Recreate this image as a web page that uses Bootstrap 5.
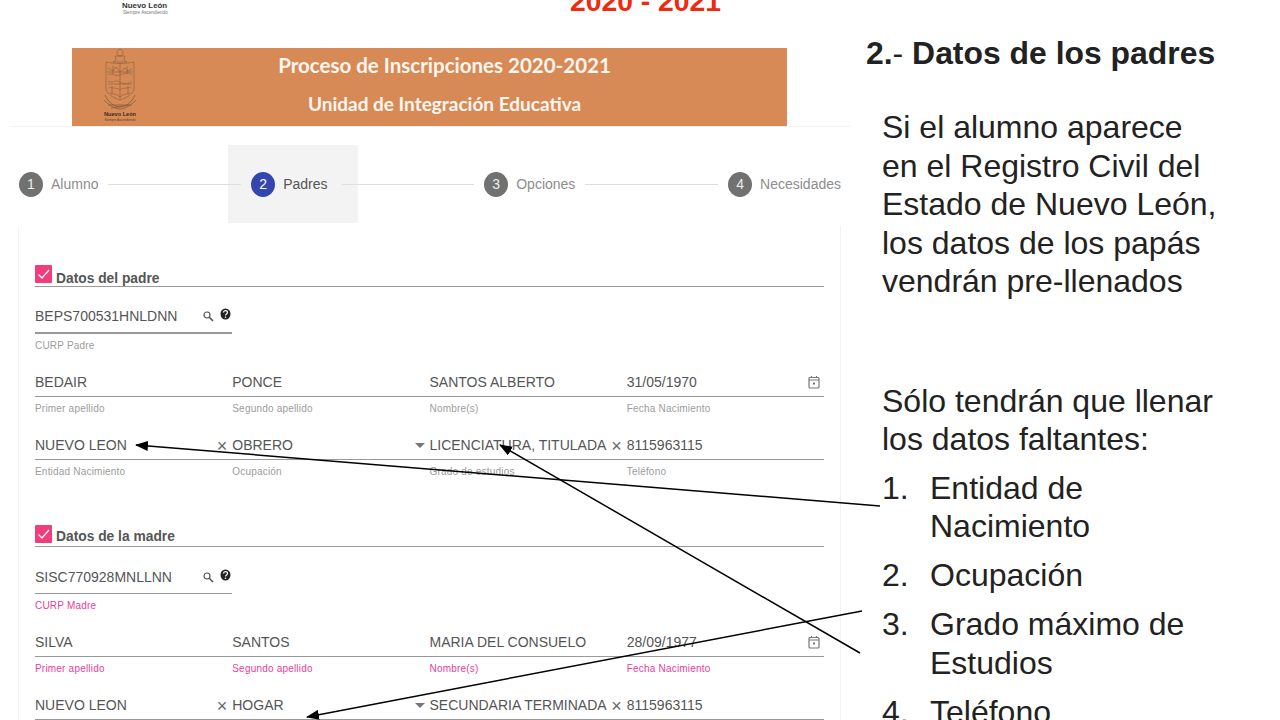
<!DOCTYPE html>
<html lang="es">
<head>
<meta charset="utf-8">
<title>Proceso de Inscripciones 2020-2021</title>
<link href="https://cdn.jsdelivr.net/npm/bootstrap@5.3.0/dist/css/bootstrap.min.css" rel="stylesheet">
<style>
html,body{height:720px;overflow:hidden;background:#fff}
body{font-family:"Liberation Sans",Arial,sans-serif;position:relative}
.slide{width:1280px;height:720px;overflow:hidden}
.left-pane{width:855px;flex:none}
.top-strip{height:48px;overflow:hidden}
.gob-logo{width:45px;margin-left:122px;flex:none;color:#333}
.gob-name{font-size:7.9px;font-weight:700;line-height:9px;white-space:nowrap;margin-top:1px}
.gob-sub{font-size:4.6px;line-height:6px;color:#777;white-space:nowrap;margin-left:1px}
.ciclo{font-size:28.3px;font-weight:700;color:#ee2a10;line-height:26px;margin-top:-12px;width:153px;margin-left:402px;text-align:center;white-space:nowrap}
.banner-wrap{border-bottom:1px solid #f1f1f1;margin:0 5px 0 10px;padding:0 63px 0 62px}
.banner{height:78px;background:#d88a56;color:#fff}
.coat{width:34px;height:74px;margin-left:31px;flex:none}
.banner-text{font-family:Lato,sans-serif;font-weight:700;color:#fdf6f0;padding:5px 35px 0 0}
.banner-t1{font-size:20.5px;line-height:24px}
.banner-t2{font-size:19px;line-height:22px;margin-top:16px}
.stepper{height:78px;padding:1px 14px 0 19px;gap:10px;margin-top:18px;font-size:14px}
.step{position:relative;gap:8px;color:#8d8d8d;white-space:nowrap}
.step-on{color:#555;margin-right:4px}
.step-on::before{content:"";position:absolute;left:-23px;right:-30px;top:-27px;bottom:-26px;background:#f3f3f3;z-index:0}
.step>*{position:relative;z-index:1}
.step-num{width:24px;height:25px;border-radius:50%;background:#717171;color:#eee;font-size:14px}
.step-on .step-num{background:#3346b0;color:#fff}
.step-line{flex:1;height:1px;background:#dfdfdf;position:relative;z-index:1}
.form-sheet{margin:3px 14px 0 18px;padding:39px 16px 0 16px;border-left:1px solid #f2f2f2;border-right:1px solid #f2f2f2;height:500px}
.sec-head{height:22px;border-bottom:1.5px solid #9a9a9a;gap:4px;font-size:13.8px;font-weight:700;color:#555;line-height:16px}
.sec-gap{margin-top:34px}
.tick{width:17px;height:18px;background:#f23d7c;border-radius:1px;flex:none;margin-bottom:3px}
.sec-title{margin-bottom:1px}
.sec-title-low{margin-bottom:-1px}
.fields{margin-top:15px}
.field-col{height:63px}
.field-box{height:32px;border-bottom:1.5px solid #999;font-size:14px;color:#555;padding-right:4px;white-space:nowrap;padding-bottom:3px}
.box-curp{width:197px;padding-bottom:5px;border-bottom-width:2px;padding-right:0}
.box-thin{border-bottom-width:1.5px}
.curp-row{height:63px}
.field-cap{font-size:10px;line-height:12px;color:#9c9c9c;margin-top:6px;letter-spacing:.2px}
.cap-pink .field-cap{color:#e8409a}
.mark-x{color:#666;font-size:18px;line-height:20px;margin-right:1px}
.caret-down{width:0;height:0;border-left:5px solid transparent;border-right:5px solid transparent;border-top:5px solid #777;margin:0 1px 8px 0}
.ico-find{margin:0 6px 5px 0}
.ico-help{margin:0 1px 5px 0}
.ico-cal{margin-bottom:4px}
.right-pane{flex:1;padding:35px 0 0 11px;color:#222}
.slide-head{font-size:31.9px;font-weight:700;line-height:36px;white-space:nowrap;margin:0}
.thin-dash{font-weight:400}
.slide-txt{font-size:32px;line-height:38.5px;margin:0 0 0 16px;white-space:nowrap}
.txt-one{margin-top:37px}
.txt-two{margin-top:81px}
.steps-list{list-style:none;padding:0;margin:10px 0 0 16px;font-size:32px;line-height:38.5px;white-space:nowrap}
.steps-list li{display:flex;margin-bottom:10.500px}
.steps-num{width:48px;flex:none}
.arrows{position:absolute;left:0;top:0;width:1280px;height:720px;pointer-events:none}
</style>
</head>
<body>
<div class="slide d-flex">
  <div class="left-pane">
    <div class="top-strip d-flex align-items-start">
      <div class="gob-logo">
        <div class="gob-name">Nuevo León</div>
        <div class="gob-sub">Siempre Ascendiendo</div>
      </div>
      <div class="ciclo">2020 - 2021</div>
    </div>
    <div class="banner-wrap">
      <div class="banner d-flex align-items-start">
        <svg class="coat" viewBox="0 0 34 74" fill="none" stroke="#80603f" stroke-width=".6">
          <path d="M14 5c0-5 6-5 6 0 0 2-1 3-3 3s-3-1-3-3zM12 8h10l-1 4 3 2H10l3-2z"/>
          <path d="M3 14c8 2 20 2 28 0v26c0 6-8 10-14 12C11 50 3 46 3 40z"/>
          <path d="M5 20l5 3 3-4 4 5 5-4 3 3 4-2M5 27c4-3 7 2 12 0s9-3 12 0M5 33c4 3 7-2 12 1s9 2 12-1M6 39c4 2 7 0 11 3 3-3 7-1 11-3M7 45c3 1 7 1 10 4 3-3 7-3 10-4M17 15v36M4 24h26M5 36h24M10 18v8M24 18v8M9 38v8M25 38v8"/>
          <path d="M2 47c3 7 9 12 15 12s12-5 15-12M1 52c4 4 10 9 16 9s12-5 16-9M5 57l24 0M8 60l18-3" stroke-width=".8"/>
          <text x="17" y="68" text-anchor="middle" font-size="5.600" font-weight="700" fill="#3a2a1c" stroke="none" font-family="Liberation Sans">Nuevo León</text>
          <text x="17" y="73" text-anchor="middle" font-size="3.200" fill="#5a4030" stroke="none" font-family="Liberation Sans">Siempre Ascendiendo</text>
        </svg>
        <div class="banner-text flex-grow-1 text-center">
          <div class="banner-t1">Proceso de Inscripciones 2020-2021</div>
          <div class="banner-t2">Unidad de Integración Educativa</div>
        </div>
      </div>
    </div>
    <div class="stepper d-flex align-items-center">
      <div class="step d-flex align-items-center"><span class="step-num d-flex align-items-center justify-content-center">1</span><span>Alumno</span></div>
      <div class="step-line"></div>
      <div class="step step-on d-flex align-items-center"><span class="step-num d-flex align-items-center justify-content-center">2</span><span>Padres</span></div>
      <div class="step-line"></div>
      <div class="step d-flex align-items-center"><span class="step-num d-flex align-items-center justify-content-center">3</span><span>Opciones</span></div>
      <div class="step-line"></div>
      <div class="step d-flex align-items-center"><span class="step-num d-flex align-items-center justify-content-center">4</span><span>Necesidades</span></div>
    </div>
    <div class="form-sheet">
      <div class="sec-head d-flex align-items-end">
        <svg class="tick" viewBox="0 0 17 18"><path d="M3.500 9.500l3.500 3.500 7-8" fill="none" stroke="#fff" stroke-width="1.200"/></svg>
        <span class="sec-title-low">Datos del padre</span>
      </div>
      <div class="fields">
        <div class="curp-row">
          <div class="field-box box-curp d-flex align-items-end">
            <span class="flex-grow-1">BEPS700531HNLDNN</span>
            <svg width="12" height="12" viewBox="0 0 12 12" class="ico-find" fill="none" stroke="#555" stroke-width="1.200"><circle cx="5" cy="5" r="3"/><path d="M7.500 7.500L11 11" stroke-width="1.600"/></svg>
            <svg width="11" height="14" viewBox="0 0 11 14" class="ico-help"><ellipse cx="5.500" cy="6" rx="5" ry="5.500" fill="#222"/><path d="M3.500 4.500c0-2.500 4-2.500 4 0 0 1.500-2 1.500-2 3" fill="none" stroke="#fff" stroke-width="1.200"/><circle cx="5.500" cy="9.300" r=".8" fill="#fff"/></svg>
          </div>
          <div class="field-cap">CURP Padre</div>
        </div>
        <div class="row g-0">
          <div class="col-3 field-col"><div class="field-box d-flex align-items-end">BEDAIR</div><div class="field-cap">Primer apellido</div></div>
          <div class="col-3 field-col"><div class="field-box d-flex align-items-end">PONCE</div><div class="field-cap">Segundo apellido</div></div>
          <div class="col-3 field-col"><div class="field-box d-flex align-items-end">SANTOS ALBERTO</div><div class="field-cap">Nombre(s)</div></div>
          <div class="col-3 field-col"><div class="field-box d-flex align-items-end justify-content-between"><span>31/05/1970</span><svg width="12" height="14" viewBox="0 0 12 14" class="ico-cal" fill="none" stroke="#777" stroke-width="1.200"><rect x="1" y="2.500" width="10" height="10.500" rx="1"/><path d="M1 5h10M3.500 1v2M8.500 1v2"/><rect x="5" y="7.500" width="2" height="2" fill="#777" stroke="none"/></svg></div><div class="field-cap">Fecha Nacimiento</div></div>
          <div class="col-3 field-col"><div class="field-box d-flex align-items-end justify-content-between"><span>NUEVO LEON</span><span class="mark-x">×</span></div><div class="field-cap">Entidad Nacimiento</div></div>
          <div class="col-3 field-col"><div class="field-box d-flex align-items-end justify-content-between"><span>OBRERO</span><span class="caret-down"></span></div><div class="field-cap">Ocupación</div></div>
          <div class="col-3 field-col"><div class="field-box d-flex align-items-end justify-content-between"><span>LICENCIATURA, TITULADA</span><span class="mark-x">×</span></div><div class="field-cap">Grado de estudios</div></div>
          <div class="col-3 field-col"><div class="field-box d-flex align-items-end">8115963115</div><div class="field-cap">Teléfono</div></div>
        </div>
      </div>
      <div class="sec-head sec-gap d-flex align-items-end">
        <svg class="tick" viewBox="0 0 17 18"><path d="M3.500 9.500l3.500 3.500 7-8" fill="none" stroke="#fff" stroke-width="1.200"/></svg>
        <span class="sec-title">Datos de la madre</span>
      </div>
      <div class="fields cap-pink">
        <div class="curp-row">
          <div class="field-box box-curp box-thin d-flex align-items-end">
            <span class="flex-grow-1">SISC770928MNLLNN</span>
            <svg width="12" height="12" viewBox="0 0 12 12" class="ico-find" fill="none" stroke="#555" stroke-width="1.200"><circle cx="5" cy="5" r="3"/><path d="M7.500 7.500L11 11" stroke-width="1.600"/></svg>
            <svg width="11" height="14" viewBox="0 0 11 14" class="ico-help"><ellipse cx="5.500" cy="6" rx="5" ry="5.500" fill="#222"/><path d="M3.500 4.500c0-2.500 4-2.500 4 0 0 1.500-2 1.500-2 3" fill="none" stroke="#fff" stroke-width="1.200"/><circle cx="5.500" cy="9.300" r=".8" fill="#fff"/></svg>
          </div>
          <div class="field-cap">CURP Madre</div>
        </div>
        <div class="row g-0">
          <div class="col-3 field-col"><div class="field-box d-flex align-items-end">SILVA</div><div class="field-cap">Primer apellido</div></div>
          <div class="col-3 field-col"><div class="field-box d-flex align-items-end">SANTOS</div><div class="field-cap">Segundo apellido</div></div>
          <div class="col-3 field-col"><div class="field-box d-flex align-items-end">MARIA DEL CONSUELO</div><div class="field-cap">Nombre(s)</div></div>
          <div class="col-3 field-col"><div class="field-box d-flex align-items-end justify-content-between"><span>28/09/1977</span><svg width="12" height="14" viewBox="0 0 12 14" class="ico-cal" fill="none" stroke="#777" stroke-width="1.200"><rect x="1" y="2.500" width="10" height="10.500" rx="1"/><path d="M1 5h10M3.500 1v2M8.500 1v2"/><rect x="5" y="7.500" width="2" height="2" fill="#777" stroke="none"/></svg></div><div class="field-cap">Fecha Nacimiento</div></div>
          <div class="col-3 field-col"><div class="field-box d-flex align-items-end justify-content-between"><span>NUEVO LEON</span><span class="mark-x">×</span></div></div>
          <div class="col-3 field-col"><div class="field-box d-flex align-items-end justify-content-between"><span>HOGAR</span><span class="caret-down"></span></div></div>
          <div class="col-3 field-col"><div class="field-box d-flex align-items-end justify-content-between"><span>SECUNDARIA TERMINADA</span><span class="mark-x">×</span></div></div>
          <div class="col-3 field-col"><div class="field-box d-flex align-items-end">8115963115</div></div>
        </div>
      </div>
    </div>
  </div>
  <div class="right-pane">
    <h1 class="slide-head">2.<span class="thin-dash">-</span> Datos de los padres</h1>
    <p class="slide-txt txt-one">Si el alumno aparece<br>en el Registro Civil del<br>Estado de Nuevo León,<br>los datos de los papás<br>vendrán pre-llenados</p>
    <p class="slide-txt txt-two">Sólo tendrán que llenar<br>los datos faltantes:</p>
    <ol class="steps-list">
      <li><span class="steps-num">1.</span><span>Entidad de<br>Nacimiento</span></li>
      <li><span class="steps-num">2.</span><span>Ocupación</span></li>
      <li><span class="steps-num">3.</span><span>Grado máximo de<br>Estudios</span></li>
      <li><span class="steps-num">4.</span><span>Teléfono</span></li>
    </ol>
  </div>
</div>
<svg class="arrows" viewBox="0 0 1280 720">
  <defs><marker id="ah" markerUnits="userSpaceOnUse" markerWidth="13" markerHeight="10" refX="12" refY="5" orient="auto"><path d="M0 0L13 5L0 10z" fill="#000"/></marker></defs>
  <g stroke="#000" stroke-width="1.500" fill="none">
    <line x1="880" y1="506" x2="136" y2="445" marker-end="url(#ah)"/>
    <line x1="860" y1="653" x2="500" y2="445" marker-end="url(#ah)"/>
    <line x1="862" y1="611" x2="307" y2="717" marker-end="url(#ah)"/>
  </g>
</svg>
<script src="https://cdn.jsdelivr.net/npm/bootstrap@5.3.0/dist/js/bootstrap.bundle.min.js"></script>
</body>
</html>
